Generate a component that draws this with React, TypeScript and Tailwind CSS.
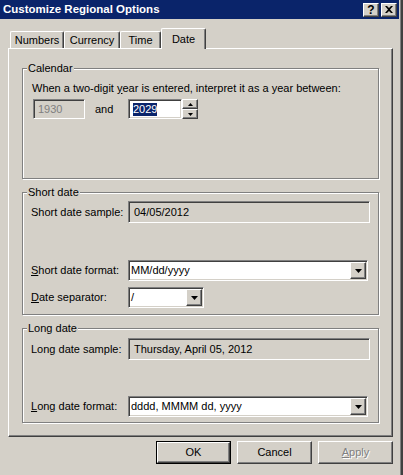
import React from 'react'

const raised =
  'border border-t-white border-l-white border-r-[#404040] border-b-[#404040] shadow-[inset_-1px_-1px_0_#808080]'
const sunken =
  'border border-t-[#808080] border-l-[#808080] border-r-white border-b-white shadow-[inset_1px_1px_0_#404040,inset_-1px_-1px_0_#d4d0c8]'

function Arrow({ up = false, small = false }: { up?: boolean; small?: boolean }) {
  const pts = small ? (up ? '2.5,0 5,3 0,3' : '0,0 5,0 2.5,3') : '0,0 7,0 3.5,4'
  return (
    <svg width={small ? 5 : 7} height={small ? 3 : 4} viewBox={small ? '0 0 5 3' : '0 0 7 4'}>
      <polygon points={pts} fill="#000" />
    </svg>
  )
}

function Combo({ value, className }: { value: string; className: string }) {
  return (
    <div className={`${sunken} bg-white h-[21px] p-[1px] flex items-center ${className}`}>
      <span className="flex-1 pl-[1px]">{value}</span>
      <div className={`${raised} bg-[#d4d0c8] w-[16px] h-[17px] flex items-center justify-center`}>
        <Arrow />
      </div>
    </div>
  )
}

function Group({ title, className, children }: { title: string; className: string; children: React.ReactNode }) {
  return (
    <div className={`relative border border-[#808080] shadow-[1px_1px_0_#fff,inset_1px_1px_0_#fff] ${className}`}>
      <span className="absolute left-[4px] top-[-7px] bg-[#d4d0c8] px-[1px]">{title}</span>
      {children}
    </div>
  )
}

function Label({ children }: { children: React.ReactNode }) {
  return <div className="w-[105px] pl-[8px] shrink-0">{children}</div>
}

export default function App() {
  return (
    <div className="w-[403px] h-[475px] bg-[#d4d0c8] overflow-hidden text-[11px] leading-[13px] text-black [font-family:'Liberation_Sans',Arial,sans-serif] shadow-[inset_-2px_0_0_#404040,inset_-3px_0_0_#808080]">
      {/* title bar */}
      <div className="h-[19px] w-[399px] bg-[#0a246a] flex items-center pl-[3px] pr-[2px]">
        <span className="text-white font-bold text-[11.5px]">Customize Regional Options</span>
        <div className="ml-auto flex gap-[2px]">
          <div className={`${raised} bg-[#d4d0c8] w-[16px] h-[14px] flex items-center justify-center font-bold text-[12px] leading-[12px]`}>?</div>
          <div className={`${raised} bg-[#d4d0c8] w-[16px] h-[14px] flex items-center justify-center`}>
            <svg width="8" height="7" viewBox="0 0 8 7">
              <path d="M0 0h2l2 2 2-2h2L5 3.5 8 7H6L4 5 2 7H0l3-3.5z" fill="#000" />
            </svg>
          </div>
        </div>
      </div>

      {/* tabs */}
      <div className="h-[29px] flex items-end pl-[10px]">
        {['Numbers', 'Currency', 'Time'].map((t, i) => (
          <div
            key={t}
            className={`h-[17px] flex items-center justify-center pt-[1px] border-t border-l border-r border-t-white border-l-white border-r-[#404040] shadow-[inset_-1px_0_0_#808080] rounded-t-[2px] ${
              i === 0 ? 'w-[54px]' : i === 1 ? 'w-[56px]' : 'w-[41px]'
            }`}
          >
            {t}
          </div>
        ))}
        <div className="relative z-10 mb-[-1px] h-[21px] w-[45px] bg-[#d4d0c8] flex items-start justify-center pt-[4px] border-t border-l border-r border-t-white border-l-white border-r-[#404040] shadow-[inset_-1px_0_0_#808080] rounded-t-[2px]">
          Date
        </div>
      </div>

      {/* tab panel */}
      <div className="ml-[8px] w-[385px] h-[389px] border border-t-white border-l-white border-r-[#404040] border-b-[#404040] shadow-[inset_-1px_-1px_0_#808080]">
        <Group title="Calendar" className="ml-[13px] mt-[19px] w-[357px] h-[111px]">
          <div className="mt-[13px] pl-[9px]">
            When a two-digit <span className="underline">y</span>ear is entered, interpret it as a year between:
          </div>
          <div className="mt-[4px] pl-[10px] flex items-center h-[20px]">
            <div className={`${sunken} w-[52px] h-[20px] pl-[4px] flex items-center text-[#808080]`}>1930</div>
            <span className="ml-[10px] w-[33px]">and</span>
            <div className={`${sunken} bg-white w-[54px] h-[20px] pl-[4px] flex items-center`}>
              <span className="bg-[#0a246a] text-white">2029</span>
            </div>
            <div className="w-[16px] h-[20px] flex flex-col">
              <div className={`${raised} bg-[#d4d0c8] h-[10px] flex items-center justify-center`}>
                <Arrow up small />
              </div>
              <div className={`${raised} bg-[#d4d0c8] h-[10px] flex items-center justify-center`}>
                <Arrow small />
              </div>
            </div>
          </div>
        </Group>

        <Group title="Short date" className="ml-[13px] mt-[13px] w-[357px] h-[123px]">
          <div className="mt-[8px] flex items-center h-[22px]">
            <Label>Short date sample:</Label>
            <div className={`${sunken} w-[242px] h-[22px] pl-[5px] flex items-center`}>04/05/2012</div>
          </div>
          <div className="mt-[37px] flex items-center h-[21px]">
            <Label>
              <span className="underline">S</span>hort date format:
            </Label>
            <Combo value="MM/dd/yyyy" className="w-[240px]" />
          </div>
          <div className="mt-[6px] flex items-center h-[21px]">
            <Label>
              <span className="underline">D</span>ate separator:
            </Label>
            <Combo value="/" className="w-[76px]" />
          </div>
        </Group>

        <Group title="Long date" className="ml-[13px] mt-[13px] w-[357px] h-[95px]">
          <div className="mt-[9px] flex items-center h-[22px]">
            <Label>Long date sample:</Label>
            <div className={`${sunken} w-[242px] h-[22px] pl-[5px] flex items-center`}>Thursday, April 05, 2012</div>
          </div>
          <div className="mt-[36px] flex items-center h-[21px]">
            <Label>
              <span className="underline">L</span>ong date format:
            </Label>
            <Combo value="dddd, MMMM dd, yyyy" className="w-[240px]" />
          </div>
        </Group>
      </div>

      {/* buttons */}
      <div className="mt-[4px] flex justify-end gap-[6px] pr-[10px]">
        <div className="w-[75px] h-[23px] border border-black">
          <div className={`${raised} bg-[#d4d0c8] h-full flex items-center justify-center`}>OK</div>
        </div>
        <div className={`${raised} bg-[#d4d0c8] w-[75px] h-[23px] flex items-center justify-center`}>Cancel</div>
        <div className={`${raised} bg-[#d4d0c8] w-[75px] h-[23px] flex items-center justify-center text-[#808080] [text-shadow:1px_1px_0_#fff]`}>
          <span>
            <span className="underline">A</span>pply
          </span>
        </div>
      </div>
    </div>
  )
}
